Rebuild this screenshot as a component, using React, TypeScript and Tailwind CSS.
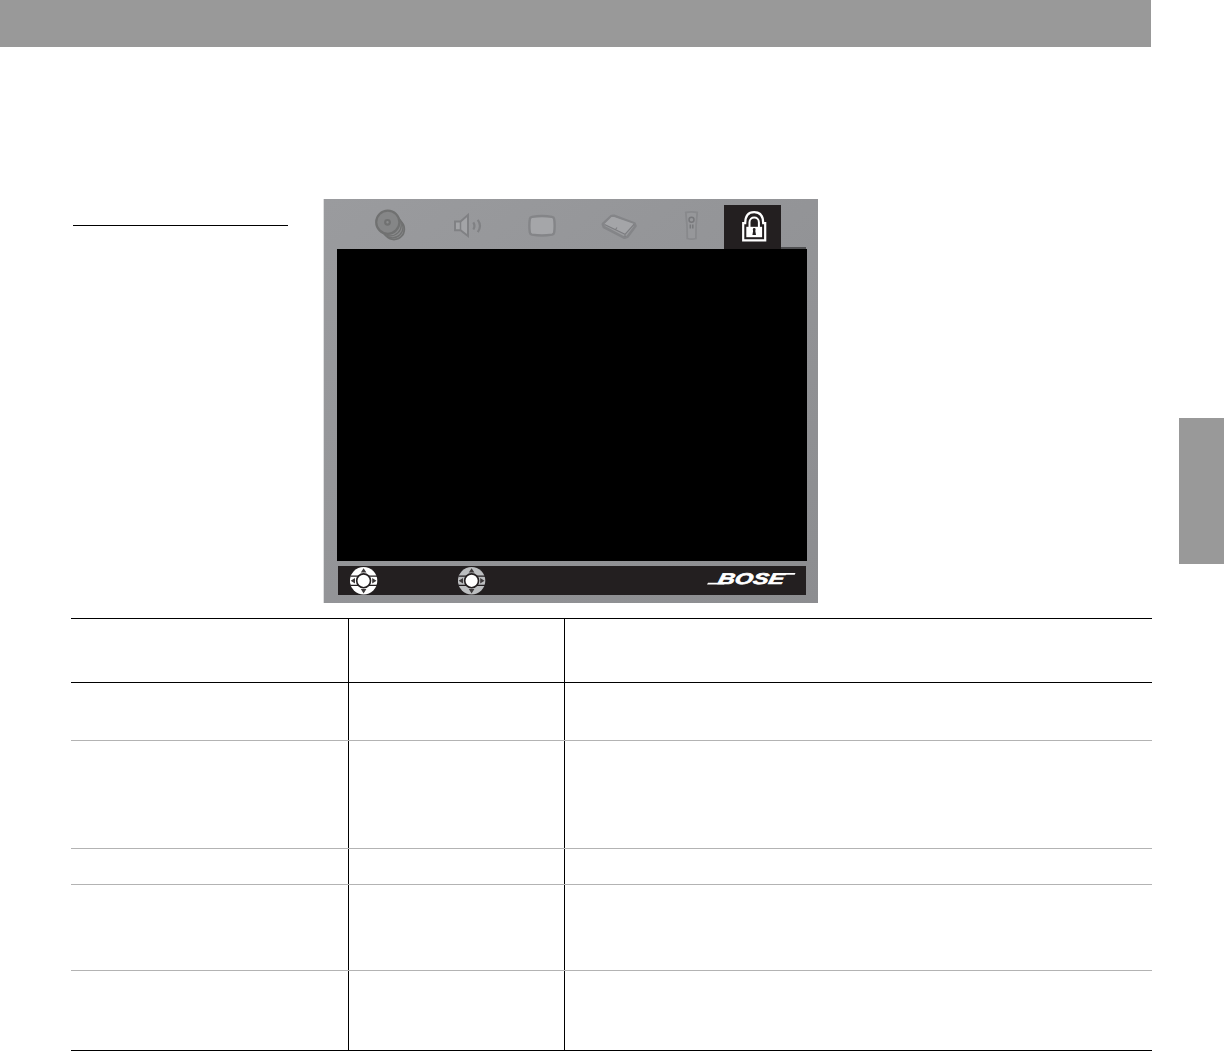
const rows = [
  { height: "h-[63px]", line: "bg-black" },
  { height: "h-[57px]", line: "bg-[#b3b3b3]" },
  { height: "h-[107px]", line: "bg-[#b3b3b3]" },
  { height: "h-[35px]", line: "bg-[#b3b3b3]" },
  { height: "h-[85px]", line: "bg-[#b3b3b3]" },
  { height: "h-[79px]", line: "bg-black" },
];

const DiscsIcon = () => (
  <svg width="32" height="34" viewBox="0 0 32 34" fill="#8a8b8c" stroke="#707171">
    <circle cx="20" cy="21.2" r="10.4" strokeWidth="1.6" />
    <circle cx="18.3" cy="19.2" r="10.7" strokeWidth="1.2" />
    <circle cx="16.3" cy="16.9" r="11" strokeWidth="1.2" />
    <circle cx="13.8" cy="14.2" r="11.6" fill="#858687" strokeWidth="2.2" />
    <circle cx="13.5" cy="14.3" r="2.3" fill="#8b8c8d" strokeWidth="2.2" />
  </svg>
);

const SpeakerIcon = () => (
  <svg width="30" height="26" viewBox="0 0 30 26" fill="none" stroke="#808184">
    <path d="M2 8.5h5.500L15 2v21L7.500 17.300H2z" fill="#a3a4a7" strokeWidth="2" />
    <path d="M7.500 8.800v8.400" strokeWidth="1.500" />
    <path d="M20.300 9.400c1.500 2.300 1.500 4.800 0 7.100M24.800 6.800c2.600 3.700 2.600 8.600 0 12.300" strokeWidth="2.200" />
  </svg>
);

const ScreenIcon = () => (
  <svg width="30" height="24" viewBox="0 0 30 24">
    <path
      d="M5 2.900q10-1.700 20 0 2 .4 2.200 2.300.9 6.600 0 13.200-.2 1.800-2.200 2.200-10 1.700-20 0-2-.4-2.200-2.200-.9-6.600 0-13.200Q3 3.300 5 2.900z"
      fill="#a5a6a9"
      stroke="#848588"
      strokeWidth="2.400"
    />
  </svg>
);

const ConsoleIcon = () => (
  <svg width="38" height="28" viewBox="0 0 38 28" strokeLinejoin="round">
    <path d="M11.500 3 2.800 11l1 3L24.500 24.800l3-1L35.500 13l-1-2.500L14 2.800z" fill="#9a9b9e" stroke="#848588" strokeWidth="2.600" />
    <path d="M11.500 4 4.500 11l20.300 10L33.500 10.800 14 4z" fill="#a4a5a8" />
    <path d="M4.500 11.500 25 21.300 34 11.300M25 21.500v2.500M15.500 16.500l1.500-2" fill="none" stroke="#7c7d80" strokeWidth="1.100" />
  </svg>
);

const RemoteIcon = () => (
  <svg width="16" height="32" viewBox="0 0 16 32">
    <path d="M1.800 2.500q5.700-1.300 11.400 0l-1.100 13-.2 13q-4.300 1.200-8.600 0l-.3-13z" fill="#96979a" stroke="#88898c" strokeWidth="1.800" />
    <circle cx="7.500" cy="9.800" r="2.500" fill="none" stroke="#77787b" strokeWidth="1.500" />
    <path d="M6.300 14.500v4M8.800 14.500v4" stroke="#77787b" strokeWidth="1.500" />
  </svg>
);

const LockIcon = () => (
  <svg width="25" height="33" viewBox="0 0 25 33" fill="none" stroke="#fff">
    <path d="M1.200 13.200h2C3.200 6 6 2.100 12.200 2.100s9 3.900 9 11.100h2v17.200h-22z" strokeWidth="2.200" />
    <path d="M7.500 18v-5.800c0-6.300 9.400-6.300 9.400 0V18" strokeWidth="2" />
    <path d="M4.300 16.800h15.800v10.400H4.300z" fill="#fff" stroke="none" />
    <path d="M10.800 19.500a1.400 1.400 0 1 1 2.800 0l-.3 1.500.7 4h-3.600l.7-4z" fill="#231f20" stroke="none" />
  </svg>
);

const DialIcon = ({ color }: { color: string }) => (
  <svg width="28" height="28" viewBox="0 0 28 28">
    <circle cx="13.600" cy="13.800" r="13.700" fill={color} />
    <path d="M.5 9.200h26.600M.5 18.400h26.600" stroke="#231f20" strokeWidth="1.300" />
    <path d="M13.600 1.200 16.400 5.500h-5.600zM13.600 26.400l2.800-4.300h-5.600zM.7 13.800 5 11.100v5.400zM26.500 13.800l-4.300-2.700v5.400z" fill="#3d393a" />
    <circle cx="13.600" cy="13.800" r="6.900" fill="#fff" stroke="#231f20" strokeWidth="1.600" />
  </svg>
);

const BoseLogo = () => (
  <svg width="90" height="18" viewBox="0 0 90 18" fill="#fff" role="img" aria-label="Bose">
    <path d="M1 12.800h17l-.8 1.700H0zM70 3h18.500l-.8 1.700H69z" />
    <text
      x="10.500"
      y="14.200"
      textLength="66"
      lengthAdjust="spacingAndGlyphs"
      transform="translate(2.800 0) skewX(-12)"
      stroke="#fff"
      strokeWidth=".6"
      className="font-['Liberation_Sans',sans-serif] text-[15.500px] leading-none font-bold italic"
    >
      BOSE
    </text>
  </svg>
);

const SettingsScreen = () => (
  <div className="flex h-[404px] w-[495px] flex-col border-l border-[#dedfe0] bg-linear-to-br from-[#9a9b9e] to-[#8c8d90]">
    <nav className="flex h-[50px] items-start">
      <div className="ml-[50px] mt-[9px]"><DiscsIcon /></div>
      <div className="ml-[47px] mt-[14px]"><SpeakerIcon /></div>
      <div className="ml-[44px] mt-[15px]"><ScreenIcon /></div>
      <div className="ml-[43px] mt-[14px]"><ConsoleIcon /></div>
      <div className="ml-[46px] mt-[11px]"><RemoteIcon /></div>
      <div className="ml-6 mt-1.5 h-11 w-[57px] bg-[#231f20] pt-[5px] pl-[18px]">
        <LockIcon />
      </div>
      <div className="mt-12 h-0.5 w-[25px] bg-[#4f4f51]" />
    </nav>
    <div className="ml-[13px] h-[312px] w-[470px] bg-black" />
    <footer className="mt-[5px] ml-3.5 flex h-[29px] w-[468px] items-center bg-[#231f20] pl-[12px]">
      <DialIcon color="#fff" />
      <div className="ml-[80px]"><DialIcon color="#bcbec0" /></div>
      <div className="ml-[221px] -mt-1"><BoseLogo /></div>
    </footer>
  </div>
);

const RowsTable = () => (
  <div className="ml-[71px] mt-[15px] w-[1081px] border-t border-black">
    {rows.map((row, i) => (
      <div key={i}>
        <div className={`grid grid-cols-[277px_1px_215px_1px_1fr] ${row.height}`}>
          <div />
          <div className="bg-black" />
          <div />
          <div className="bg-black" />
          <div />
        </div>
        <div className={`h-px ${row.line}`} />
      </div>
    ))}
  </div>
);

export default function App() {
  return (
    <div className="flex h-[1051px] w-[1224px] overflow-hidden bg-white">
      <main className="w-[1152px]">
        <header className="h-[47px] w-[1151px] bg-[#999999]" />
        <section className="mt-[152px] flex">
          <div className="w-[323px] pt-[26px] pl-[73px]">
            <div className="h-px w-[215px] bg-black" />
          </div>
          <SettingsScreen />
        </section>
        <RowsTable />
      </main>
      <aside className="ml-[27px] mt-[418px] h-[146px] w-[45px] bg-[#999999]" />
    </div>
  );
}
